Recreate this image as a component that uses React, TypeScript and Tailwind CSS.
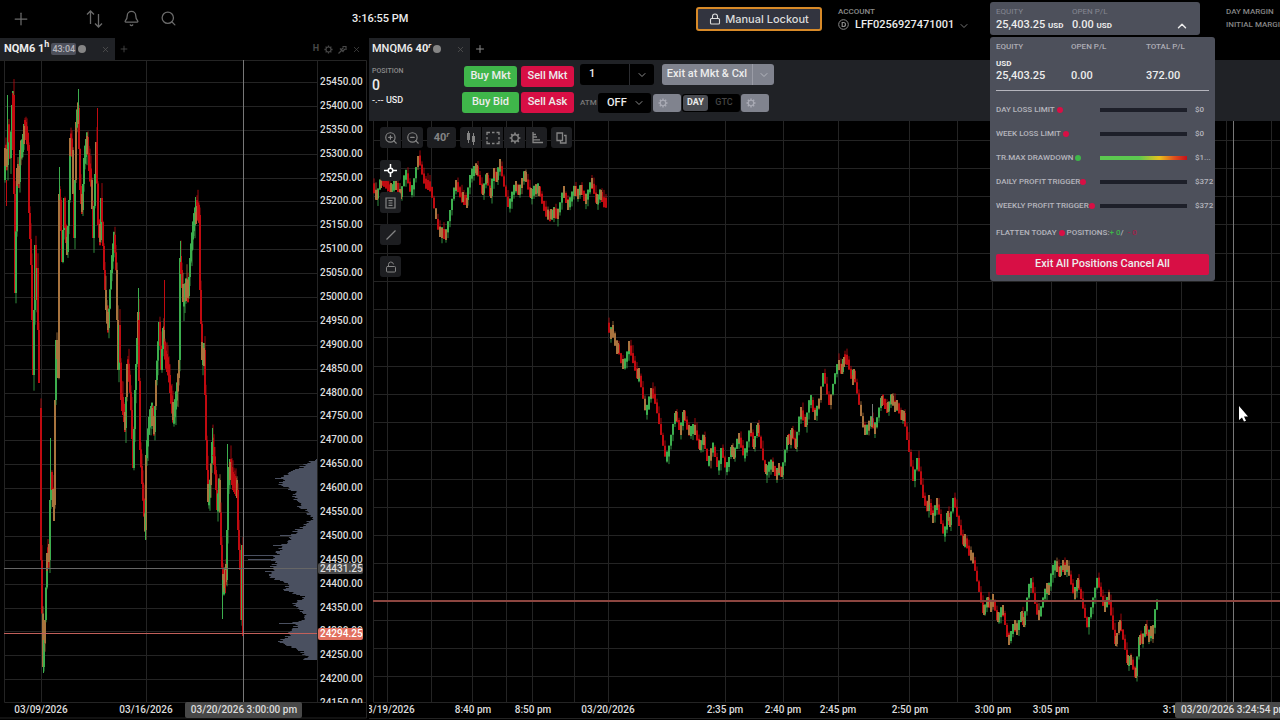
import { Bell, ChevronDown, ChevronUp, Lock, LockOpen, Plus, Search, X, ZoomIn, ZoomOut } from "lucide-react";
import React from "react";

type Point = [number, number];

const GREEN = "#3cae4e";
const RED = "#c00a10";
const MIXED = "#a8743e";

const hourly: Point[][] = [
  [
    [4, 180], [5, 150], [7, 165], [8, 125], [10, 158], [12, 105], [12, 205], [13, 95], [15, 293], [17, 170], [19, 182],
    [20, 150], [22, 148], [24, 128], [26, 132], [28, 145], [29, 213], [31, 265], [33, 375], [35, 245], [36, 300], [37, 268],
    [38, 330], [39, 383],
  ],
  [
    [40, 408], [41, 560], [43, 667], [45, 620], [47, 555], [49, 560], [50, 500], [51, 473], [53, 505], [54, 505], [55, 400],
    [56, 340], [58, 378], [59, 196], [60, 200], [62, 262], [64, 198], [65, 228], [67, 252], [69, 200], [70, 140], [72, 150],
    [74, 238], [76, 122], [78, 108], [80, 190], [82, 210], [84, 158], [87, 138], [89, 170], [91, 180], [93, 238], [96, 142],
    [98, 225], [100, 240], [101, 198], [104, 270], [106, 310], [108, 328], [111, 270], [114, 235], [116, 270], [118, 370],
    [119, 325], [121, 400], [123, 408], [125, 428], [127, 366], [129, 375], [131, 410], [133, 468], [135, 390], [138, 312],
    [140, 450], [143, 500], [145, 530], [146, 455], [149, 420], [152, 410], [154, 432], [156, 380], [159, 322], [161, 370],
    [163, 328], [165, 358], [168, 368], [171, 400], [173, 418], [175, 405], [178, 378], [179, 360], [180, 258], [183, 300],
    [186, 285], [188, 296], [190, 258], [193, 225], [196, 208], [199, 215], [200, 290], [202, 358], [204, 350], [206, 440],
    [208, 500], [210, 485], [212, 442], [215, 470], [217, 510], [219, 480], [221, 545], [223, 590], [225, 572], [226, 580],
    [228, 480], [230, 464], [232, 480], [235, 486], [237, 490], [238, 530], [240, 570], [241, 620], [242, 545], [243, 636],
  ],
];

const hourlyWicks = [
  { x: 7, from: 95, to: 140, color: GREEN },
  { x: 12, from: 93, to: 150, color: RED },
  { x: 6, from: 180, to: 206, color: RED },
  { x: 78, from: 89, to: 120, color: GREEN },
  { x: 97, from: 108, to: 150, color: RED },
  { x: 59, from: 167, to: 200, color: GREEN },
  { x: 43, from: 640, to: 673, color: GREEN },
  { x: 50, from: 438, to: 480, color: GREEN },
  { x: 138, from: 288, to: 320, color: GREEN },
  { x: 164, from: 280, to: 330, color: RED },
  { x: 145, from: 500, to: 540, color: GREEN },
  { x: 195, from: 197, to: 212, color: GREEN },
  { x: 180, from: 241, to: 262, color: GREEN },
  { x: 222, from: 580, to: 619, color: GREEN },
  { x: 225, from: 570, to: 593, color: RED },
  { x: 227, from: 444, to: 480, color: GREEN },
  { x: 212, from: 428, to: 455, color: GREEN },
  { x: 243, from: 640, to: 660, color: GREEN },
];

const range: Point[][] = [
  [
    [373, 185], [377, 198], [381, 180], [386, 183], [391, 191], [396, 182], [401, 197], [406, 170], [412, 195], [419, 156],
    [425, 183], [431, 187], [440, 235], [442, 230], [446, 238], [456, 182], [463, 200], [467, 200], [471, 175], [477, 167],
    [483, 193], [487, 175], [491, 196], [494, 170], [497, 180], [500, 161], [509, 207], [516, 183], [519, 193], [525, 173],
    [531, 196], [534, 190], [539, 188], [546, 213], [551, 217], [554, 210], [558, 217], [564, 188], [568, 208], [575, 188],
    [578, 197], [581, 187], [586, 202], [592, 180], [597, 202], [601, 192], [603, 202], [607, 203],
  ],
  [
    [608, 323], [611, 337], [613, 327], [617, 352], [618, 345], [623, 367], [627, 360], [629, 343], [638, 377], [639, 370],
    [647, 416], [651, 390], [655, 397], [667, 462], [676, 413], [681, 433], [684, 412], [689, 433], [695, 427], [700, 448],
    [704, 437], [709, 467], [713, 442], [719, 472], [722, 448], [727, 472], [732, 447], [734, 457], [739, 435], [745, 458],
    [751, 425], [754, 447], [758, 425], [766, 472], [770, 465], [773, 464], [777, 478], [779, 465], [782, 475], [788, 437],
    [791, 443], [792, 430], [796, 447], [801, 409], [806, 425], [811, 394], [815, 418], [820, 400], [824, 373], [830, 405],
    [837, 368], [839, 362], [842, 372], [844, 359], [848, 360], [853, 383], [854, 371], [865, 433], [868, 428], [872, 419],
    [875, 432], [882, 398], [888, 410], [892, 396], [895, 410], [897, 402], [902, 418], [904, 413], [908, 440], [910, 452],
    [914, 481], [918, 458], [924, 498], [928, 509], [929, 497], [933, 521], [937, 500], [945, 538], [948, 513], [950, 525],
    [954, 498], [964, 544], [965, 536], [971, 558], [973, 555], [984, 613], [988, 599], [991, 610], [993, 596], [998, 620],
    [1003, 607], [1009, 643], [1015, 622], [1017, 633], [1022, 613], [1024, 625], [1031, 577], [1039, 620], [1047, 585],
    [1049, 593], [1053, 567], [1057, 564], [1060, 575], [1063, 562], [1065, 573], [1067, 562], [1075, 597], [1078, 580],
    [1088, 627], [1098, 578], [1105, 610], [1109, 594], [1116, 644], [1120, 622], [1125, 643], [1128, 663], [1131, 657],
    [1136, 676], [1140, 637], [1143, 642], [1146, 626], [1149, 640], [1151, 628], [1153, 637], [1157, 600],
  ],
];

const profile: Point[] = [
  [459, 1], [462, 6], [466, 14], [470, 22], [474, 28], [478, 36], [480, 30], [484, 35], [488, 27], [492, 20], [497, 21],
  [502, 17], [506, 17], [510, 8], [516, 6], [520, 6], [525, 12], [530, 20], [535, 25], [540, 29], [545, 35], [550, 36],
  [556, 42], [560, 42], [565, 42], [570, 45], [575, 47], [578, 44], [581, 34], [585, 28], [590, 30], [593, 22], [596, 9],
  [600, 18], [605, 23], [608, 18], [612, 12], [618, 12], [622, 24], [626, 20], [630, 23], [634, 26], [638, 33], [641, 36],
  [644, 32], [648, 20], [652, 14], [656, 8], [659, 10],
];

const profileSpikes: Point[] = [
  [478, 42], [482, 38], [535, 37], [545, 44], [555, 73], [559, 69], [566, 47], [571, 52], [575, 48], [623, 38], [641, 39],
];

const rangeGridX = [387, 431, 472, 506, 532, 574, 608, 725, 783, 838, 909, 957, 992, 1051, 1096, 1181, 1226, 1271];

const rangeTimes = [
  { x: 388, label: "03/19/2026" },
  { x: 473, label: "8:40 pm" },
  { x: 533, label: "8:50 pm" },
  { x: 608, label: "03/20/2026" },
  { x: 725, label: "2:35 pm" },
  { x: 783, label: "2:40 pm" },
  { x: 838, label: "2:45 pm" },
  { x: 910, label: "2:50 pm" },
  { x: 993, label: "3:00 pm" },
  { x: 1051, label: "3:05 pm" },
  { x: 1181, label: "3:10 pm" },
];

const limits = [
  { name: "DAY LOSS LIMIT", dot: "bg-[#d80f45]", bar: "bg-[#1d1f29]", value: "$0", gap: "ml-[2px]" },
  { name: "WEEK LOSS LIMIT", dot: "bg-[#d80f45]", bar: "bg-[#1d1f29]", value: "$0", gap: "ml-[2px]" },
  {
    name: "TR.MAX DRAWDOWN",
    dot: "bg-[#3fb64a]",
    bar: "bg-[linear-gradient(90deg,#5cc850_45%,#e8c21c_68%,#e0521c_85%,#c4101c)]",
    value: "$1...",
    gap: "ml-[2px]",
  },
  { name: "DAILY PROFIT TRIGGER", dot: "bg-[#d80f45]", bar: "bg-[#1d1f29]", value: "$372", gap: "" },
  { name: "WEEKLY PROFIT TRIGGER", dot: "bg-[#d80f45]", bar: "bg-[#1d1f29]", value: "$372", gap: "" },
];

function noise(n: number) {
  const v = Math.sin(n * 12.9898) * 43758.5453;
  return v - Math.floor(v);
}

function priceAt(path: Point[], x: number) {
  for (let i = 1; i < path.length; i++) {
    const [x0, y0] = path[i - 1];
    const [x1, y1] = path[i];
    if (x <= x1) return x1 === x0 ? y1 : y0 + ((y1 - y0) * (x - x0)) / (x1 - x0);
  }
  return path[path.length - 1][1];
}

function Candles({ path, step, width, body, wick, mix }: { path: Point[]; step: number; width: number; body: number; wick: number; mix: number }) {
  const start = path[0][0];
  const end = path[path.length - 1][0];
  const bars: React.ReactElement[] = [];
  for (let x = start; x < end; x += step) {
    const open = priceAt(path, x);
    const close = priceAt(path, x + step);
    const up = close < open;
    const mid = (open + close) / 2;
    const half = Math.max(Math.abs(open - close), body) / 2;
    const color = noise(x + 7) < mix ? MIXED : up ? GREEN : RED;
    const above = up ? 0 : noise(x) * wick;
    const below = up ? noise(x + 3) * wick : 0;
    bars.push(
      <g key={x} fill={color}>
        <rect x={x + width / 2 - 0.5} y={mid - half - above} width={1} height={half * 2 + above + below} opacity={0.8} />
        <rect x={x} y={mid - half} width={width} height={half * 2} />
      </g>
    );
  }
  // short swings overlap, so the bar at the turn takes both colours
  const turns = path.flatMap(([x, y], i) => {
    if (i === 0 || i === path.length - 1) return [];
    const before = y - path[i - 1][1];
    const after = path[i + 1][1] - y;
    if (before * after > 0 || Math.min(Math.abs(before), Math.abs(after)) > 22) return [];
    return [{ x, y: before > 0 ? y - body + 2 : y - 2 }];
  });
  return (
    <g>
      {bars}
      {turns.map((turn, i) => (
        <rect key={i} x={turn.x - 1} y={turn.y} width={2} height={body} fill={MIXED} />
      ))}
    </g>
  );
}

function Gear({ size = 12 }: { size?: number }) {
  return (
    <svg width={size} height={size} viewBox="0 0 12 12" fill="none" stroke="currentColor">
      <circle cx="6" cy="6" r="3.3" strokeWidth="1.4" />
      <path d="M6 .6v2M6 9.4v2M.6 6h2M9.4 6h2M2.2 2.2l1.4 1.4M8.4 8.4l1.4 1.4M2.2 9.8l1.4-1.4M8.4 3.6l1.4-1.4" strokeWidth="1.7" />
    </svg>
  );
}

function OrdersIcon() {
  return (
    <svg width="17" height="18" viewBox="0 0 17 18" fill="none" stroke="currentColor" strokeWidth="1.3">
      <path d="M4.500 14V1M1 4.500L4.500 1 8 4.500M12.500 4v13M9 13.500l3.500 3.500 3.500-3.500" />
    </svg>
  );
}

function CandleIcon() {
  return (
    <svg width="12" height="14" viewBox="0 0 12 14" fill="currentColor">
      <path d="M3 0h1v2h1v7H4v3H3V9H2V2h1zM8 2h1v3h1v6H9v3H8v-3H7V5h1z" />
    </svg>
  );
}

function SelectionIcon() {
  return (
    <svg width="14" height="14" viewBox="0 0 14 14" fill="none" stroke="currentColor" strokeWidth="1.3">
      <path d="M1 4V1.500h3M6 1.500h2.500M10.500 1.500H13V4M13 6v2.500M13 10v2.500h-2.500M8.500 12.500H6M4 12.500H1V10M1 8.500V6" />
    </svg>
  );
}

function ProfileIcon() {
  return (
    <svg width="12" height="12" viewBox="0 0 12 12" fill="none" stroke="currentColor" strokeWidth="1.3">
      <path d="M2 0v10.500h10M2 2.500h3M2 5h4M2 7.800h7" />
    </svg>
  );
}

function WindowsIcon() {
  return (
    <svg width="11" height="12" viewBox="0 0 11 12" fill="none" stroke="currentColor" strokeWidth="1.3">
      <path d="M1 1h5.500v7.500H1zM8 3.500h2V11H4.500V8.500" />
    </svg>
  );
}

function CrosshairIcon() {
  return (
    <svg width="13" height="13" viewBox="0 0 13 13" fill="none" stroke="currentColor" strokeWidth="1.5">
      <circle cx="6.500" cy="6.500" r="2.300" />
      <path d="M6.500 0v4M6.500 9v4M0 6.500h4M9 6.500h4" />
    </svg>
  );
}

function NoteIcon() {
  return (
    <svg width="11" height="12" viewBox="0 0 11 12" fill="none" stroke="currentColor" strokeWidth="1.2">
      <path d="M1 1h9v10H1zM3.500 3.700h4M3.500 6h4M3.500 8.300h4" />
    </svg>
  );
}

function LineIcon() {
  return (
    <svg width="12" height="12" viewBox="0 0 12 12" stroke="currentColor" strokeWidth="1.3">
      <path d="M1.500 10.500l9-9" />
    </svg>
  );
}

function PinIcon() {
  return (
    <svg width="9" height="9" viewBox="0 0 9 9" fill="none" stroke="currentColor" strokeWidth="1.2">
      <path d="M.5 8.500l3-3M2 3.500l3.500 3.500M3.500 4.500l2-2M5 6l2-2M4.500 1.500H8V5" />
    </svg>
  );
}

function Header() {
  return (
    <header className="relative z-20 flex h-[38px] shrink-0 items-start">
      <nav className="flex h-[37px] w-[352px] shrink-0 items-center text-[#6b6b6b]">
        <button aria-label="Add" className="ml-[11px]">
          <Plus size={20} strokeWidth={1.5} />
        </button>
        <button aria-label="Orders" className="ml-[55px]">
          <OrdersIcon />
        </button>
        <button aria-label="Alerts" className="ml-5">
          <Bell size={17} strokeWidth={1.8} />
        </button>
        <button aria-label="Search" className="ml-5">
          <Search size={17} strokeWidth={1.8} />
        </button>
      </nav>
      <time className="mt-3 shrink-0 text-[11px] leading-[14px] font-medium">3:16:55 PM</time>

      <div className="ml-auto flex shrink-0 items-start">
        <button className="mt-[7px] flex h-6 w-[126px] items-center justify-center gap-1 rounded-[3px] border-2 border-[#d88a28] bg-[#32343f] font-[Inter] text-[11px] font-medium text-[#dcdcdc]">
          <Lock size={12} strokeWidth={2.2} />
          Manual Lockout
        </button>
        <div className="mt-[7px] ml-4 w-[152px]">
          <p className="text-[8px] leading-[10px] font-medium text-[#8b8b8b]">ACCOUNT</p>
          <button className="flex items-center text-[11px] leading-[15px] font-medium">
            <svg width="11" height="11" viewBox="0 0 11 11" fill="none" stroke="#8b8b8b">
              <circle cx="5.500" cy="5.500" r="4.800" />
              <path d="M4.200 3.500h1.300a2 2 0 0 1 0 4H4.200z" strokeWidth="1.2" />
            </svg>
            <span className="ml-[6px]">LFF0256927471001</span>
            <ChevronDown size={12} className="mt-[2px] ml-1 text-[#777]" />
          </button>
        </div>
        <div className="relative mt-[2px] w-[210px]">
          <button className="flex h-[33px] w-full items-end rounded-[3px] bg-[#4d505b] px-[6px] pb-[2px] text-left">
            <span className="w-[76px]">
              <span className="block text-[8px] leading-[10px] text-[#858792]">EQUITY</span>
              <span className="block text-[11px] leading-[15px] font-medium whitespace-nowrap">
                25,403.25 <span className="text-[8px] font-bold">USD</span>
              </span>
            </span>
            <span className="flex-1">
              <span className="block text-[8px] leading-[10px] text-[#858792]">OPEN P/L</span>
              <span className="block text-[11px] leading-[15px] font-medium">
                0.00 <span className="text-[8px] font-bold">USD</span>
              </span>
            </span>
            <ChevronUp size={14} strokeWidth={2.5} className="mr-[5px]" />
          </button>
          <EquityPanel />
        </div>
        <div className="mt-[5px] ml-[26px] w-[54px] overflow-hidden text-[8px] leading-[13px] font-medium whitespace-nowrap text-[#858585]">
          <p>DAY MARGIN</p>
          <p>INITIAL MARGIN</p>
        </div>
      </div>
    </header>
  );
}

function EquityPanel() {
  return (
    <section className="absolute top-[35px] left-0 w-[225px] rounded-[3px] bg-[#4d505b] px-[6px] pt-[5px] pb-[6px]">
      <dl className="grid grid-cols-[75px_75px_1fr] border-b border-[#b5b5bd] pb-[8px]">
        <div>
          <dt className="text-[8px] leading-[10px] font-medium text-[#adadb5]">EQUITY</dt>
          <dd className="mt-[6px] text-[11px] leading-[12px] font-medium">
            <span className="block text-[8px] font-bold">USD</span>
            25,403.25
          </dd>
        </div>
        <div>
          <dt className="text-[8px] leading-[10px] font-medium text-[#adadb5]">OPEN P/L</dt>
          <dd className="mt-[18px] text-[11px] leading-[12px] font-medium">0.00</dd>
        </div>
        <div>
          <dt className="text-[8px] leading-[10px] font-medium text-[#adadb5]">TOTAL P/L</dt>
          <dd className="mt-[18px] text-[11px] leading-[12px] font-medium">372.00</dd>
        </div>
      </dl>
      <ul className="mt-[7px] text-[8px] font-medium text-[#b5b5bd]">
        {limits.map((limit) => {
          return (
            <li key={limit.name} className="flex h-6 items-center whitespace-nowrap">
              <span className="flex w-[104px] shrink-0 items-center">
                {limit.name}
                <span className={`${limit.gap} size-[6px] rounded-full ${limit.dot}`} />
              </span>
              <span className={`h-1 w-[87px] shrink-0 ${limit.bar}`} />
              <span className="ml-2">{limit.value}</span>
            </li>
          );
        })}
      </ul>
      <p className="mt-[10px] flex items-center text-[8px] leading-[10px] font-medium text-[#b5b5bd]">
        FLATTEN TODAY
        <span className="mx-[2px] size-[6px] rounded-full bg-[#d80f45]" />
        POSITIONS:<span className="text-[#3fb64a]">+ 0</span>/<span className="ml-1 text-[#a32049]">- 0</span>
      </p>
      <button className="mt-4 block h-[21px] w-full rounded-[2px] bg-[#d80f45] text-[11px] font-medium">Exit All Positions Cancel All</button>
    </section>
  );
}

function HourlyChart() {
  const prices = Array.from({ length: 27 }, (_, i) => 25450 - i * 50);
  const rows = Array.from({ length: 201 }, (_, i) => 459 + i);
  return (
    <section className="flex min-h-0 min-w-0 flex-col">
      <div className="flex h-[22px] shrink-0 items-center">
        <div className="flex h-full w-[115px] items-center bg-[#202226] pl-1 text-[11px] font-bold">
          <span className="whitespace-nowrap">
            NQM6 1<sup className="text-[9px]">h</sup>
          </span>
          <span className="ml-[2px] rounded-[2px] bg-[#4d505b] px-[1px] text-[9px] leading-[12px] font-medium text-[#b5b5bb]">43:04</span>
          <span className="ml-[2px] size-2 rounded-full bg-[#858585]" />
          <button aria-label="Close NQM6" className="mr-[5px] ml-auto text-[#555]">
            <X size={9} />
          </button>
        </div>
        <button aria-label="Add tab" className="ml-1 text-[#4c4c4c]">
          <Plus size={10} />
        </button>
        <div className="mr-[6px] ml-auto flex items-center gap-[5px] text-[#484848]">
          <button className="text-[9px] font-bold">H</button>
          <button aria-label="Chart settings">
            <Gear size={9} />
          </button>
          <button aria-label="Detach chart">
            <PinIcon />
          </button>
          <button aria-label="Close chart">
            <X size={9} />
          </button>
        </div>
      </div>
      <svg viewBox="0 60 367 660" className="min-h-0 w-full flex-1 text-[10px] font-medium" role="img" aria-label="NQM6 hourly chart">
        <g stroke="#242424" fill="none">
          {prices.slice(0, 26).map((price, i) => (
            <path key={price} d={`M4 ${Math.round(82 + i * 23.89) + 0.5}H317`} />
          ))}
          <path d="M41.500 60V702M146.500 60V702M317.500 60V702M4.500 60V702.500H366M0 60.500H366.500V718H0" />
        </g>
        <g fill="#4a5060">
          {rows.map((y) => {
            const w = Math.max(priceAt(profile, y) + (noise(y) - 0.4) * 7, 1);
            return <rect key={y} x={317 - w} y={y} width={w} height={1} />;
          })}
          {profileSpikes.map(([y, w]) => (
            <rect key={y} x={317 - w} y={y} width={w} height={1} />
          ))}
        </g>
        <Candles path={hourly[0]} step={1} width={2} body={18} wick={16} mix={0.14} />
        <Candles path={hourly[1]} step={1} width={2} body={18} wick={16} mix={0.14} />
        {hourlyWicks.map((wick) => (
          <rect key={`${wick.x}-${wick.from}`} x={wick.x} y={wick.from} width={1} height={wick.to - wick.from} fill={wick.color} />
        ))}
        <g fill="none">
          <path d="M243.500 60V702" stroke="#777" />
          <path d="M4 568.500H317" stroke="#666" />
          <path d="M4 633.500H317" stroke="#c2605a" />
        </g>
        <g fill="#dcdcdc">
          {prices.map((price, i) => (
            <text key={price} x="320" y={Math.round(85 + i * 23.89)}>
              {price.toFixed(2)}
            </text>
          ))}
        </g>
        <rect x="318" y="703" width="48" height="14" fill="#000" />
        <rect x="318" y="563" width="45" height="11" rx="2" fill="#4b4b4b" />
        <text x="320" y="572" fill="#ddd">24431.25</text>
        <rect x="318" y="628" width="45" height="12" rx="2" fill="#e2705f" />
        <text x="320" y="637" fill="#fff">24294.25</text>
        <g fill="#dcdcdc" textAnchor="middle">
          <text x="41" y="713">03/09/2026</text>
          <text x="146" y="713">03/16/2026</text>
          <rect x="185" y="702" width="117" height="16" rx="2" fill="#484848" />
          <text x="244" y="713">03/20/2026 3:00:00 pm</text>
        </g>
      </svg>
    </section>
  );
}

function OrderBar() {
  const order = "h-[21px] rounded-[3px] text-[11px] font-medium";
  return (
    <div className="flex h-[61px] shrink-0 bg-[#202226] pt-1">
      <div className="w-[93px] shrink-0 pt-[2px] pl-[3px]">
        <p className="text-[7px] leading-[10px] font-medium text-[#8b8b8b]">POSITION</p>
        <p className="text-[14px] leading-[18px] font-medium">0</p>
        <p className="text-[9px] leading-[12px] font-medium">-.-- USD</p>
      </div>
      <div className="flex w-[112px] shrink-0 flex-col gap-[5px] pt-[2px]">
        <div className="flex justify-end gap-1">
          <button className={`${order} w-[53px] bg-[#3fb64a]`}>Buy Mkt</button>
          <button className={`${order} w-[53px] bg-[#d80f45]`}>Sell Mkt</button>
        </div>
        <div className="flex justify-end gap-[2px]">
          <button className={`${order} w-[57px] bg-[#3fb64a]`}>Buy Bid</button>
          <button className={`${order} w-[53px] bg-[#d80f45]`}>Sell Ask</button>
        </div>
      </div>
      <div className="ml-[6px] flex flex-col gap-2">
        <div className="flex h-[21px]">
          <input aria-label="Quantity" defaultValue="1" className="w-[50px] rounded-l-[3px] border-r border-[#2b2c30] bg-black pl-[9px] text-[11px] font-medium outline-none" />
          <button aria-label="Quantity presets" className="flex w-6 items-center justify-center rounded-r-[3px] bg-black text-[#8b8b8b]">
            <ChevronDown size={12} />
          </button>
          <button className="ml-2 w-[91px] rounded-l-[3px] border-r border-[#9a9ca6] bg-[#80838e] text-[11px] font-medium whitespace-nowrap">Exit at Mkt &amp; Cxl</button>
          <button aria-label="Exit options" className="flex w-[21px] items-center justify-center rounded-r-[3px] bg-[#80838e] text-[#b4b6be]">
            <ChevronDown size={12} />
          </button>
        </div>
        <div className="flex h-5 items-center">
          <label htmlFor="atm" className="w-[18px] text-[8px] font-medium text-[#777]">
            ATM
          </label>
          <div className="relative">
            <select id="atm" className="block h-5 w-[53px] appearance-none rounded-[3px] bg-black pl-[9px] text-[11px] leading-[20px] font-medium outline-none">
              <option>OFF</option>
            </select>
            <ChevronDown size={12} className="pointer-events-none absolute top-1 right-[6px] text-[#8b8b8b]" />
          </div>
          <button aria-label="ATM settings" className="ml-[2px] h-[18px] w-7 rounded-[3px] bg-[#80838e] pl-[5px] text-[#a9abb5]">
            <Gear size={10} />
          </button>
          <div className="ml-[1px] flex h-[18px] items-center rounded-[3px] bg-black text-[9px] font-medium">
            <button className="ml-[1px] h-4 w-[25px] rounded-[3px] bg-[#4a4c52] font-bold">DAY</button>
            <button className="w-8 text-[#444]">GTC</button>
          </div>
          <button aria-label="Order settings" className="ml-[1px] h-[18px] w-7 rounded-[3px] bg-[#80838e] pl-[5px] text-[#a9abb5]">
            <Gear size={10} />
          </button>
        </div>
      </div>
    </div>
  );
}

function ChartTools() {
  const tool = "flex h-[21px] w-[21px] items-center justify-center bg-[#1d1e21]";
  return (
    <div className="absolute top-[6px] left-[11px] text-[#858585]">
      <div className="flex gap-1">
        <div className="flex gap-[1px] overflow-hidden rounded-[3px]">
          <button aria-label="Zoom in" className={tool}>
            <ZoomIn size={14} />
          </button>
          <button aria-label="Zoom out" className={tool}>
            <ZoomOut size={14} />
          </button>
        </div>
        <button className="h-[21px] w-[29px] rounded-[3px] bg-[#1d1e21] text-[11px] leading-[18px] font-bold">
          40<sup className="text-[8px] italic">r</sup>
        </button>
        <div className="flex gap-[1px] overflow-hidden rounded-[3px]">
          <button aria-label="Bar type" className={tool}>
            <CandleIcon />
          </button>
          <button aria-label="Select area" className={tool}>
            <SelectionIcon />
          </button>
          <button aria-label="Settings" className={tool}>
            <Gear />
          </button>
          <button aria-label="Volume profile" className={tool}>
            <ProfileIcon />
          </button>
        </div>
        <button aria-label="Layouts" className={`${tool} rounded-[3px]`}>
          <WindowsIcon />
        </button>
      </div>
      <div className="mt-3 flex flex-col gap-[11px]">
        <button aria-label="Crosshair" className={`${tool} rounded-[3px] text-white`}>
          <CrosshairIcon />
        </button>
        <button aria-label="Notes" className={`${tool} rounded-[3px]`}>
          <NoteIcon />
        </button>
        <button aria-label="Line" className={`${tool} rounded-[3px]`}>
          <LineIcon />
        </button>
        <button aria-label="Lock drawings" className={`${tool} rounded-[3px]`}>
          <LockOpen size={12} />
        </button>
      </div>
    </div>
  );
}

function RangeChart() {
  const lines = Array.from({ length: 20 }, (_, i) => Math.round(139.5 + i * 28.26) + 0.5);
  return (
    <section className="flex min-h-0 min-w-0 flex-col">
      <div className="flex h-[22px] shrink-0 items-center">
        <div className="flex h-full w-[101px] items-center bg-[#202226] pl-[3px] text-[11px]">
          <span className="font-medium whitespace-nowrap">
            MNQM6 <b>40<sup className="text-[8px] italic">r</sup></b>
          </span>
          <span className="ml-[2px] size-2 rounded-full bg-[#858585]" />
          <button aria-label="Close MNQM6" className="mr-[5px] ml-auto text-[#555]">
            <X size={9} />
          </button>
        </div>
        <button aria-label="Add tab" className="ml-1 text-[#8b8b8b]">
          <Plus size={12} />
        </button>
      </div>
      <OrderBar />
      <div className="relative flex min-h-0 flex-1">
        <svg viewBox="369 121 911 599" className="h-full w-full text-[10px] font-medium" role="img" aria-label="MNQM6 range chart">
          <g stroke="#242424" fill="none">
            {lines.map((y) => (
              <path key={y} d={`M373 ${y}H1280`} />
            ))}
            {rangeGridX.map((x) => (
              <path key={x} d={`M${x + 0.5} 121V702`} />
            ))}
            <path d="M373.500 121V702.500H1280M369 718.500H1280" />
          </g>
          <Candles path={range[0]} step={2} width={2} body={10} wick={8} mix={0.08} />
          <Candles path={range[1]} step={2} width={2} body={10} wick={8} mix={0.08} />
          <path d="M872.500 404V425" stroke="#777" fill="none" />
          <path d="M1233.500 121V702" stroke="#777" fill="none" />
          <path d="M373 601H1280" stroke="#8c4640" strokeWidth="2" fill="none" />
          <g fill="#dcdcdc" textAnchor="middle">
            {rangeTimes.map((time) => (
              <text key={time.x} x={time.x} y="713">
                {time.label}
              </text>
            ))}
          </g>
          <rect x="1175" y="702" width="110" height="16" rx="2" fill="#484848" />
          <text x="1181" y="713" fill="#dcdcdc">03/20/2026 3:24:54 pm</text>
          <path d="M1239 406v14l3-2.600 2 4.200 2-.9-2-4.100h4z" fill="#fff" />
        </svg>
        <ChartTools />
      </div>
    </section>
  );
}

export default function App() {
  return (
    <div className="flex h-screen flex-col overflow-hidden bg-black font-[Roboto,sans-serif] text-[#ececec]">
      <Header />
      <main className="grid min-h-0 flex-1 grid-cols-[367fr_911fr] grid-rows-1 gap-[2px]">
        <HourlyChart />
        <RangeChart />
      </main>
    </div>
  );
}
